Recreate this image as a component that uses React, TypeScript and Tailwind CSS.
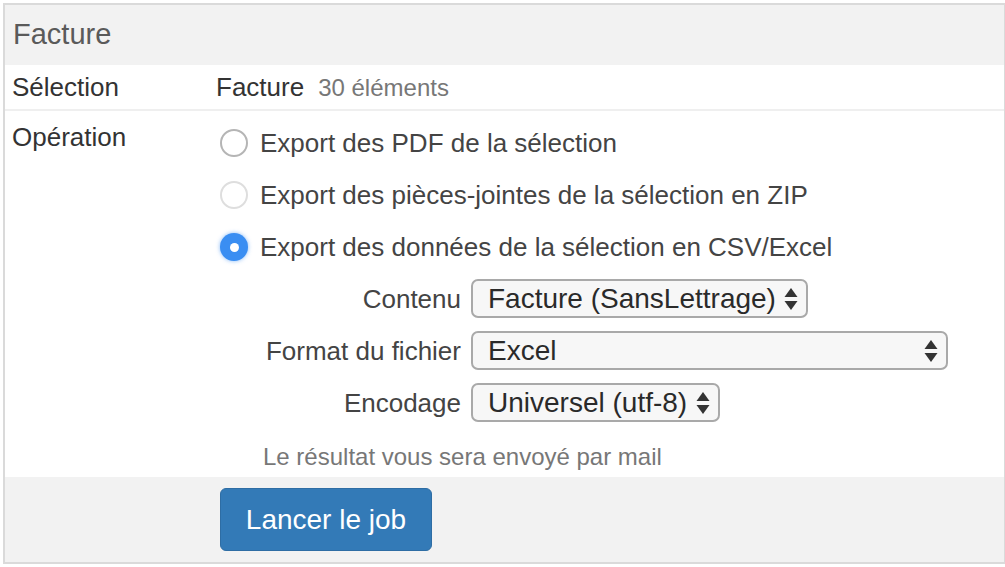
import React from 'react';

const font = { fontFamily: '"Liberation Sans", Arial, sans-serif' };

function Arrows() {
  return (
    <svg width="14" height="24" viewBox="0 0 14 24" className="shrink-0">
      <path d="M7 1 L13.5 10 L0.5 10 Z" fill="#333" />
      <path d="M7 23 L13.5 14 L0.5 14 Z" fill="#333" />
    </svg>
  );
}

function FakeSelect({ value, width }: { value: string; width: string }) {
  return (
    <div
      className={`flex h-[39px] items-center justify-between rounded-[7px] border-2 border-[#a9a9a9] bg-[#f7f7f7] pl-[15px] pr-[8px] text-[28px] leading-none text-[#2a2a2a] ${width}`}
    >
      <span>{value}</span>
      <Arrows />
    </div>
  );
}

function Radio({ state }: { state: 'off' | 'faded' | 'on' }) {
  if (state === 'on') {
    return (
      <span className="flex h-[28px] w-[28px] shrink-0 items-center justify-center rounded-full bg-[#3a8ef2] shadow-[0_0_4px_rgba(58,142,242,0.6)]">
        <span className="h-[9px] w-[9px] rounded-full bg-white" />
      </span>
    );
  }
  return (
    <span
      className={`h-[28px] w-[28px] shrink-0 rounded-full border-2 bg-white ${
        state === 'off' ? 'border-[#b5b5b5]' : 'border-[#dedede]'
      }`}
    />
  );
}

export default function App() {
  const options: { label: string; state: 'off' | 'faded' | 'on' }[] = [
    { label: 'Export des PDF de la sélection', state: 'off' },
    { label: 'Export des pièces-jointes de la sélection en ZIP', state: 'faded' },
    { label: 'Export des données de la sélection en CSV/Excel', state: 'on' },
  ];

  return (
    <div className="h-[567px] w-[1005px] overflow-hidden bg-white pl-[3px] pt-[3px]" style={font}>
      <div className="w-[1003px] border-2 border-[#dadada] bg-white">
        <div className="flex h-[60px] items-center bg-[#f2f2f2] pl-[8px] text-[29px] text-[#5a5a5a]">
          Facture
        </div>

        <div className="flex h-[46px] items-center border-b-2 border-[#efefef]">
          <div className="w-[211px] pl-[7px] text-[26px] leading-none text-[#333]">Sélection</div>
          <div className="flex items-baseline gap-[14px] leading-none">
            <span className="text-[26px] text-[#333]">Facture</span>
            <span className="text-[24px] text-[#777]">30 éléments</span>
          </div>
        </div>

        <div className="flex pb-[8px] pt-[10px]">
          <div className="w-[211px] pl-[7px] text-[26px] leading-[32px] text-[#333]">Opération</div>
          <div className="flex flex-col">
            <div className="flex flex-col gap-[24px] pl-[4px] pt-[8px]">
              {options.map((o) => (
                <div key={o.label} className="flex h-[28px] items-center gap-[12px] text-[26px] leading-none text-[#444]">
                  <Radio state={o.state} />
                  <span>{o.label}</span>
                </div>
              ))}
            </div>

            <div className="mt-[18px] grid grid-cols-[245px_auto] items-center gap-x-[10px] gap-y-[13px]">
              <div className="text-right text-[26px] leading-none text-[#444]">Contenu</div>
              <FakeSelect value="Facture (SansLettrage)" width="w-[337px]" />
              <div className="text-right text-[26px] leading-none text-[#444]">Format du fichier</div>
              <FakeSelect value="Excel" width="w-[477px]" />
              <div className="text-right text-[26px] leading-none text-[#444]">Encodage</div>
              <FakeSelect value="Universel (utf-8)" width="w-[249px]" />
            </div>

            <div className="mt-[23px] pl-[47px] text-[24px] leading-none text-[#777]">
              Le résultat vous sera envoyé par mail
            </div>
          </div>
        </div>

        <div className="flex h-[85px] items-center bg-[#f2f2f2] pl-[215px]">
          <button className="h-[63px] w-[212px] rounded-[6px] border border-[#2e6da4] bg-[#337ab7] text-[28px] text-white">
            Lancer le job
          </button>
        </div>
      </div>
    </div>
  );
}
